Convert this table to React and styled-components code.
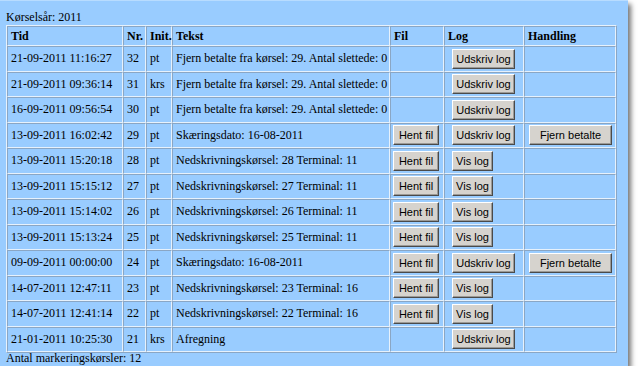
import styled, { createGlobalStyle } from 'styled-components'

const GlobalStyle = createGlobalStyle`
  body {
    margin: 0;
    background: #ffffff;
  }
`

const Panel = styled.div`
  box-sizing: border-box;
  width: 628px;
  height: 366px;
  padding: 9px 6px 0;
  background-color: #99ccff;
  border-top: 1px solid #b8dcff;
  box-shadow: 3px 4px 5px rgba(0, 0, 0, 0.55);
  font-family: 'Liberation Serif', 'Times New Roman', serif;
  font-size: 12px;
  color: #000;
`

const Caption = styled.div`
  line-height: 14px;
  height: 15px;
`

const Table = styled.table`
  table-layout: fixed;
  width: 609px;
  border-collapse: separate;
  border-spacing: 0;
  border: 1px solid;
  border-color: #e6f1fc #8aa6c4 #8aa6c4 #e6f1fc;
`

const Th = styled.th`
  text-align: left;
  font-weight: 700;
  height: 18px;
  padding: 0 3px;
  border: 1px solid;
  border-color: #8aa6c4 #e6f1fc #e6f1fc #8aa6c4;
  white-space: nowrap;
`

const Td = styled.td`
  height: 23.5px;
  padding: 0 ${(p) => p.$pad ?? 3}px;
  border: 1px solid;
  border-color: #8aa6c4 #e6f1fc #e6f1fc #8aa6c4;
  white-space: nowrap;
  overflow: hidden;
  vertical-align: middle;
`

const Button = styled.button`
  box-sizing: border-box;
  width: ${(p) => p.$w}px;
  height: 20px;
  padding: 0;
  margin: 0;
  display: block;
  background: #d6d3ce;
  border: 1px solid;
  border-color: #ffffff #4a4a4a #4a4a4a #ffffff;
  box-shadow: inset -1px -1px 0 #9c9a96;
  font-family: 'Liberation Sans', Arial, sans-serif;
  font-size: 11px;
  color: #000;
  cursor: pointer;
`

const Footer = styled.div`
  line-height: 12px;
  margin-top: -1px;
`

const rows = [
  ['21-09-2011 11:16:27', 32, 'pt', 'Fjern betalte fra kørsel: 29. Antal slettede: 0', false, 'Udskriv log', false],
  ['21-09-2011 09:36:14', 31, 'krs', 'Fjern betalte fra kørsel: 29. Antal slettede: 0', false, 'Udskriv log', false],
  ['16-09-2011 09:56:54', 30, 'pt', 'Fjern betalte fra kørsel: 29. Antal slettede: 0', false, 'Udskriv log', false],
  ['13-09-2011 16:02:42', 29, 'pt', 'Skæringsdato: 16-08-2011', true, 'Udskriv log', true],
  ['13-09-2011 15:20:18', 28, 'pt', 'Nedskrivningskørsel: 28 Terminal: 11', true, 'Vis log', false],
  ['13-09-2011 15:15:12', 27, 'pt', 'Nedskrivningskørsel: 27 Terminal: 11', true, 'Vis log', false],
  ['13-09-2011 15:14:02', 26, 'pt', 'Nedskrivningskørsel: 26 Terminal: 11', true, 'Vis log', false],
  ['13-09-2011 15:13:24', 25, 'pt', 'Nedskrivningskørsel: 25 Terminal: 11', true, 'Vis log', false],
  ['09-09-2011 00:00:00', 24, 'pt', 'Skæringsdato: 16-08-2011', true, 'Udskriv log', true],
  ['14-07-2011 12:47:11', 23, 'pt', 'Nedskrivningskørsel: 23 Terminal: 16', true, 'Vis log', false],
  ['14-07-2011 12:41:14', 22, 'pt', 'Nedskrivningskørsel: 22 Terminal: 16', true, 'Vis log', false],
  ['21-01-2011 10:25:30', 21, 'krs', 'Afregning', false, 'Udskriv log', false],
]

const logWidth = { 'Udskriv log': 63, 'Vis log': 41 }

export default function App() {
  return (
    <>
      <GlobalStyle />
      <Panel>
        <Caption>Kørselsår: 2011</Caption>
        <Table>
          <colgroup>
            <col style={{ width: 116 }} />
            <col style={{ width: 23 }} />
            <col style={{ width: 26 }} />
            <col style={{ width: 218 }} />
            <col style={{ width: 54 }} />
            <col style={{ width: 80 }} />
            <col style={{ width: 92 }} />
          </colgroup>
          <thead>
            <tr>
              <Th>Tid</Th>
              <Th>Nr.</Th>
              <Th>Init.</Th>
              <Th>Tekst</Th>
              <Th>Fil</Th>
              <Th>Log</Th>
              <Th>Handling</Th>
            </tr>
          </thead>
          <tbody>
            {rows.map(([tid, nr, init, tekst, fil, log, handling]) => (
              <tr key={nr}>
                <Td>{tid}</Td>
                <Td>{nr}</Td>
                <Td>{init}</Td>
                <Td>{tekst}</Td>
                <Td $pad={2}>{fil && <Button $w={46}>Hent fil</Button>}</Td>
                <Td $pad={7}>
                  <Button $w={logWidth[log]}>{log}</Button>
                </Td>
                <Td $pad={4}>{handling && <Button $w={83}>Fjern betalte</Button>}</Td>
              </tr>
            ))}
          </tbody>
        </Table>
        <Footer>Antal markeringskørsler: 12</Footer>
      </Panel>
    </>
  )
}
